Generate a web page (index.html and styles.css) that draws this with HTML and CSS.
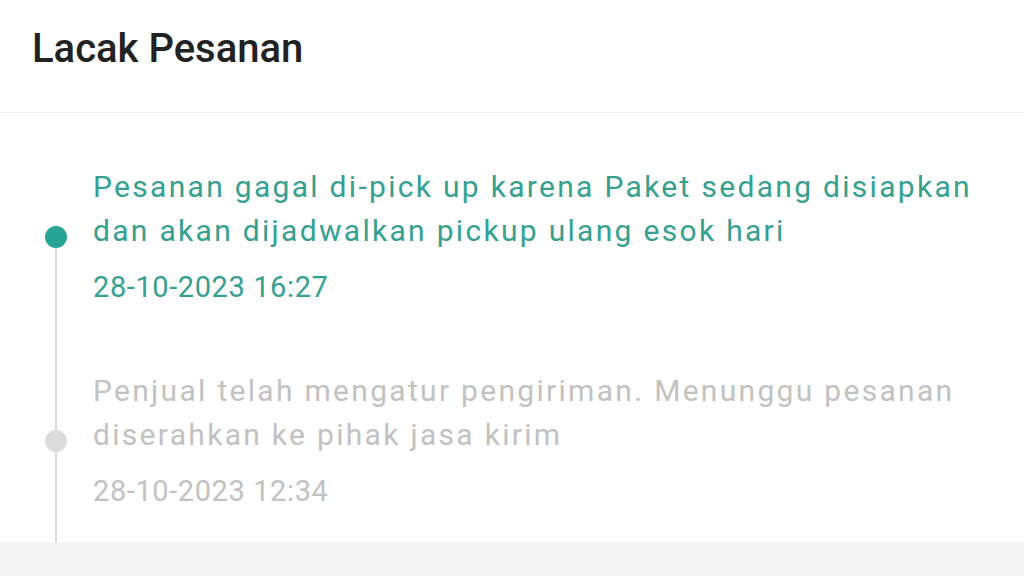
FILE: index.html
```html
<!DOCTYPE html>
<html lang="id">
<head>
  <meta charset="UTF-8" />
  <meta name="viewport" content="width=device-width, initial-scale=1.0" />
  <title>Lacak Pesanan</title>
  <link rel="stylesheet" href="styles.css">
</head>
<body>
  <div class="page">
    <header class="header">
      <h1 class="title">Lacak Pesanan</h1>
    </header>
    <div class="timeline">
      <div class="event active">
        <div class="rail">
          <div class="rail-top"></div>
          <div class="dot"></div>
          <div class="rail-bottom"></div>
        </div>
        <div class="event-body">
          <div class="event-text">Pesanan gagal di-pick up karena Paket sedang disiapkan dan akan dijadwalkan pickup ulang esok hari</div>
          <div class="event-time">28-10-2023 16:27</div>
        </div>
      </div>
      <div class="event">
        <div class="rail">
          <div class="rail-top"></div>
          <div class="dot"></div>
          <div class="rail-bottom"></div>
        </div>
        <div class="event-body">
          <div class="event-text">Penjual telah mengatur pengiriman. Menunggu pesanan diserahkan ke pihak jasa kirim</div>
          <div class="event-time">28-10-2023 12:34</div>
        </div>
      </div>
    </div>
  </div>
</body>
</html>
```

FILE: styles.css
```css
html, body {
  height: 100%;
  margin: 0;
}
body {
  font-family: Roboto, "Noto Sans", sans-serif;
  background: #f5f5f5;
  color: #212121;
}
.page {
  background: #fff;
}
.header {
  height: 112px;
  border-bottom: 1px solid #ececec;
  display: flex;
  align-items: center;
  padding: 0 32px;
}
.title {
  margin: 0;
  font-size: 40px;
  font-weight: 500;
  color: #222;
  padding-bottom: 16px;
}
.timeline {
  padding-top: 52px;
}
.event {
  display: flex;
  padding-bottom: 64px;
}
.event:last-child {
  padding-bottom: 33px;
}
.rail {
  width: 22px;
  margin-left: 45px;
  margin-right: 26px;
  display: flex;
  flex-direction: column;
  align-items: center;
  margin-bottom: -64px;
}
.event:last-child .rail {
  margin-bottom: -33px;
}
.rail-top {
  width: 2px;
  height: 61px;
  background: #dcdcdc;
}
.event.active .rail-top {
  background: transparent;
}
.dot {
  width: 22px;
  height: 22px;
  border-radius: 50%;
  background: #dcdcdc;
}
.event.active .dot {
  background: #26a595;
}
.rail-bottom {
  flex: 1;
  width: 2px;
  background: #dcdcdc;
}
.event-body {
  flex: 1;
  padding-right: 40px;
}
.event-text {
  font-size: 30px;
  line-height: 44px;
  letter-spacing: 2.3px;
  color: #c2c2c2;
}
.event-time {
  margin-top: 16px;
  font-size: 29px;
  line-height: 36px;
  letter-spacing: 0.6px;
  color: #c2c2c2;
}
.event.active .event-text,
.event.active .event-time {
  color: #36a091;
}
```
